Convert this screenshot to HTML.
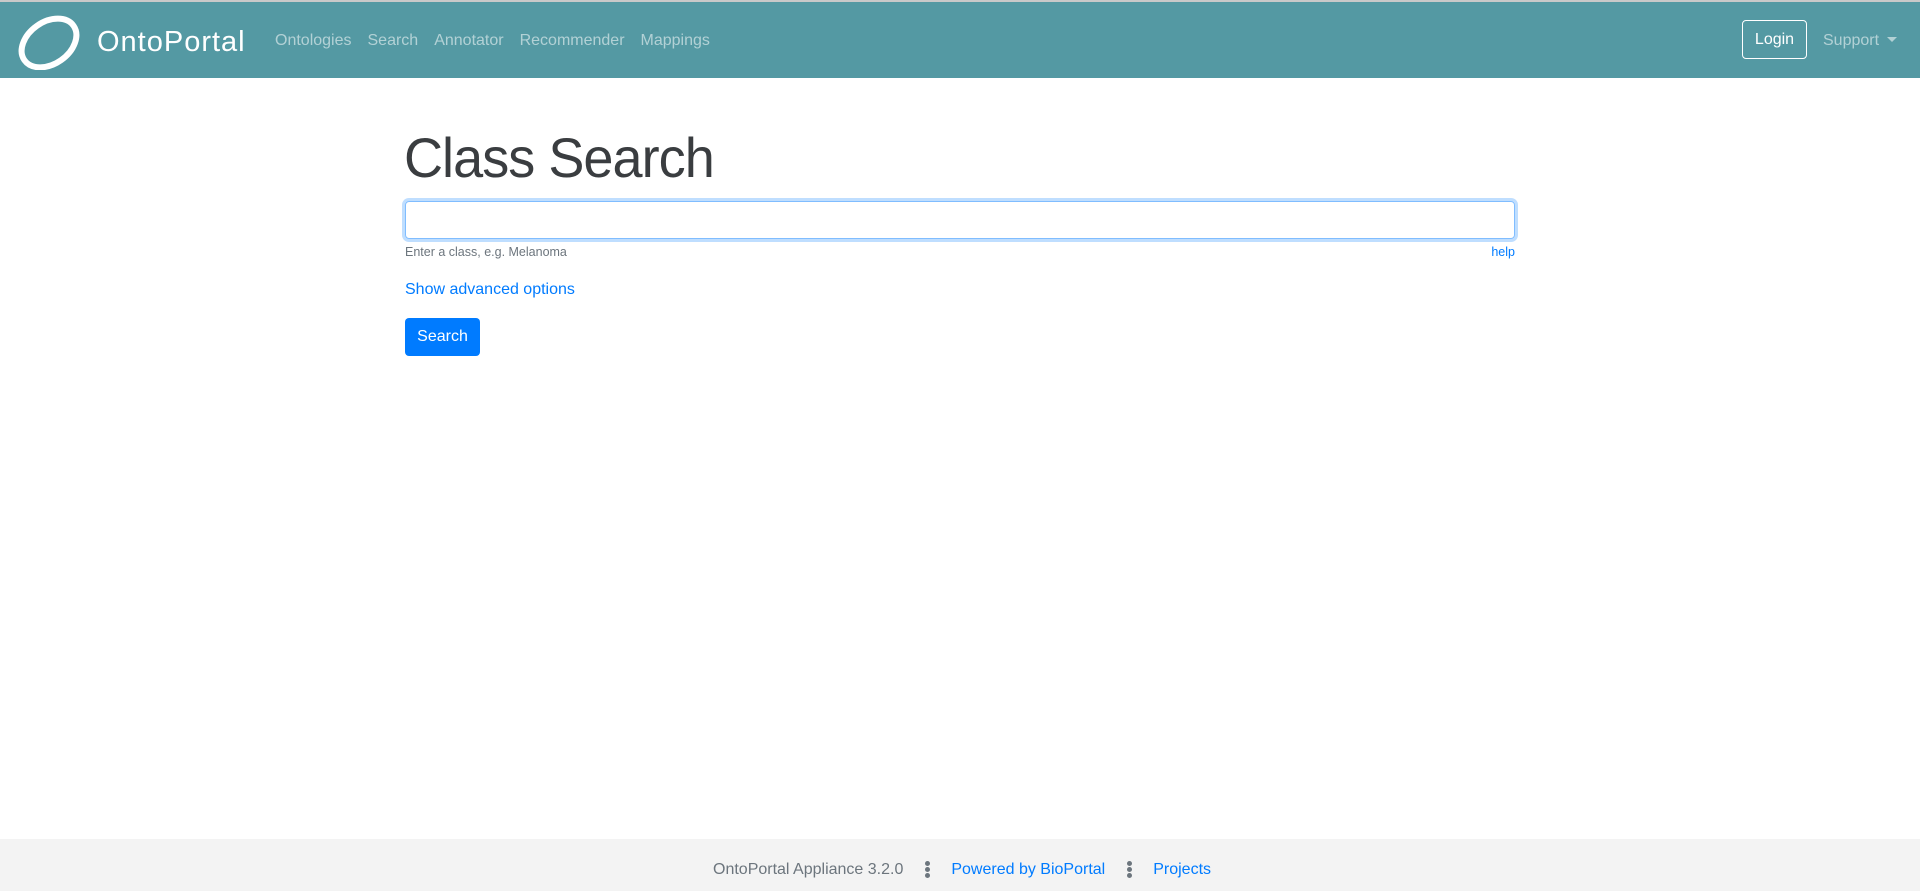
<!DOCTYPE html>
<html><head><meta charset="utf-8"><style>
*{box-sizing:border-box}
body{margin:0;width:1920px;height:891px;font-family:"Liberation Sans",sans-serif;color:#212529;background:#fff;position:relative;overflow:hidden}
.top{position:absolute;top:0;left:0;right:0;height:2px;background:#c9c9c9}
nav{position:absolute;top:2px;left:0;right:0;height:76px;background:#5499a3}
.brand{position:absolute;left:15px;top:12px;display:flex;align-items:center}
.brand span{color:#fff;font-size:29px;margin-left:10px;letter-spacing:1px}
.links{position:absolute;left:275px;top:30px;font-size:16px;color:rgba(255,255,255,.55)}
.links a{margin-right:16px}
.login{position:absolute;left:1742px;top:18px;width:65px;height:39px;border:1px solid #fff;border-radius:4px;color:#fff;font-size:16px;text-align:center;line-height:37px}
.sup{position:absolute;left:1823px;top:30px;color:rgba(255,255,255,.55);font-size:16px}
.sup:after{content:"";display:inline-block;margin-left:8px;vertical-align:3px;border-top:5px solid rgba(255,255,255,.55);border-left:5px solid transparent;border-right:5px solid transparent}
h1{position:absolute;left:404px;top:124px;margin:0;font-size:56px;font-weight:300;line-height:1.2;letter-spacing:-1px;transform:scaleX(0.965);transform-origin:left;color:#3a3d40}
.inp{position:absolute;left:405px;top:201px;width:1110px;height:38px;border:1px solid #80bdff;border-radius:4px;box-shadow:0 0 0 3px rgba(0,123,255,.25)}
.hint{position:absolute;left:405px;top:245px;font-size:12.5px;color:#6c757d}
.help{position:absolute;right:405px;top:245px;font-size:12.5px;color:#007bff}
.adv{position:absolute;left:405px;top:281px;font-size:16px;color:#007bff}
.btn{position:absolute;left:405px;top:318px;width:75px;height:38px;background:#007bff;color:#fff;border-radius:4px;font-size:16px;text-align:center;line-height:38px}
footer{position:absolute;left:0;right:0;top:839px;height:52px;background:#f3f3f3;font-size:16px;color:#6c757d}
footer .c{position:absolute;left:713px;top:21px;display:flex;align-items:center}
footer .b{color:#007bff}
.dots{display:inline-block;width:4px;margin:0 22px;}
.dots i{display:block;width:5px;height:5px;border-radius:50%;background:#6c757d;margin:1px 0}
</style></head><body>
<div class="top"></div>
<nav>
<div class="brand"><svg width="72" height="56" viewBox="0 0 72 56"><ellipse cx="34" cy="29" rx="30" ry="21" transform="rotate(-35 34 29)" fill="none" stroke="#fff" stroke-width="6"/><path d="M50 6 C62 10 64 22 56 34" fill="none" stroke="#fff" stroke-width="2"/></svg><span>OntoPortal</span></div>
<div class="links"><a>Ontologies</a><a>Search</a><a>Annotator</a><a>Recommender</a><a>Mappings</a></div>
<div class="login">Login</div>
<div class="sup">Support</div>
</nav>
<h1>Class Search</h1>
<div class="inp"></div>
<div class="hint">Enter a class, e.g. Melanoma</div>
<div class="help">help</div>
<div class="adv">Show advanced options</div>
<div class="btn">Search</div>
<footer><div class="c"><span>OntoPortal Appliance 3.2.0</span><span class="dots"><i></i><i></i><i></i></span><span class="b">Powered by BioPortal</span><span class="dots"><i></i><i></i><i></i></span><span class="b">Projects</span></div></footer>
</body></html>
